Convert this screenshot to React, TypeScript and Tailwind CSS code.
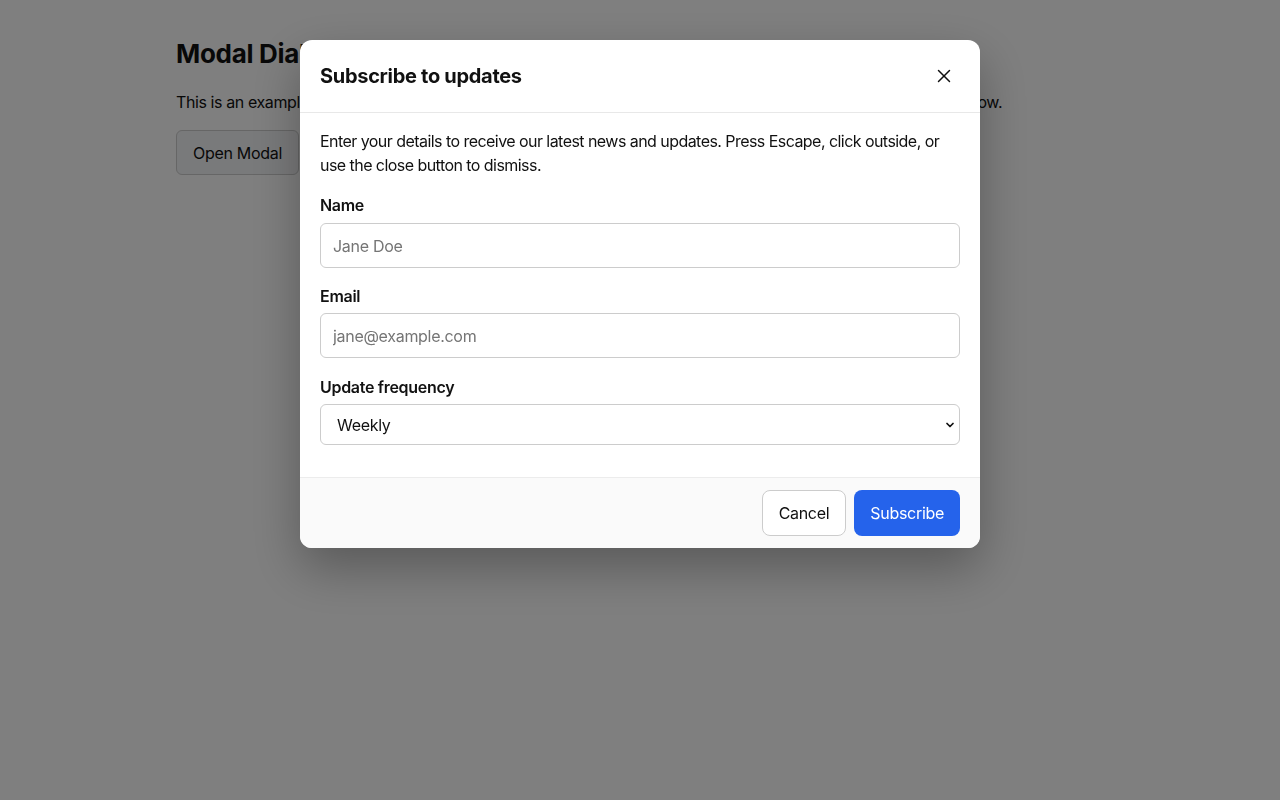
import { X, ChevronDown } from 'lucide-react'

const font = { fontFamily: 'Inter, "Noto Sans", sans-serif' }

export default function App() {
  return (
    <div className="relative min-h-[800px] bg-white tracking-[-0.3px] text-[#111]" style={font}>
      <div className="mx-auto max-w-[928px] pt-[36px]">
        <h1 className="text-[26px] font-bold leading-[36px]">Modal Dialog Example</h1>
        <p className="mt-[18px] text-base leading-6 tracking-[-0.4px]">
          This is an example of an accessible modal dialog. Click the button to open it and try its keyboard interactions below.
        </p>
        <button className="mt-4 h-[45px] rounded-md border border-[#ccc] bg-[#f3f4f6] px-4 text-base">
          Open Modal
        </button>
      </div>

      <div className="fixed inset-0 bg-black/50" />

      <div className="fixed inset-0 flex justify-center pt-10">
        <div className="h-fit w-[680px] overflow-hidden rounded-xl bg-white shadow-[0_20px_50px_rgba(0,0,0,0.3)]">
          <div className="flex h-[73px] items-center justify-between border-b border-[#e8e8e8] px-5">
            <h2 className="text-xl font-bold leading-7">Subscribe to updates</h2>
            <button className="flex h-8 w-8 items-center justify-center rounded" aria-label="Close">
              <X className="h-[22px] w-[22px]" strokeWidth={1.6} />
            </button>
          </div>

          <div className="px-5 pb-8 pt-4">
            <p className="text-base leading-6 tracking-[-0.55px]">
              Enter your details to receive our latest news and updates. Press Escape, click outside, or use the
              close button to dismiss.
            </p>

            <label className="mt-4 block text-base font-semibold leading-6">Name</label>
            <input
              className="mt-1.5 block h-[45px] w-full rounded-md border border-[#ccc] px-3 text-base placeholder:text-[#757575]"
              placeholder="Jane Doe"
            />

            <label className="mt-4 block text-base font-semibold leading-6">Email</label>
            <input
              className="mt-[5px] block h-[45px] w-full rounded-md border border-[#ccc] px-3 text-base placeholder:text-[#757575]"
              placeholder="jane@example.com"
            />

            <label className="mt-[17px] block text-base font-semibold leading-6">Update frequency</label>
            <div className="relative mt-[5px]">
              <select
                className="block h-[41px] w-full appearance-none rounded-md border border-[#ccc] bg-white pl-4 text-base"
                defaultValue="weekly"
              >
                <option value="daily">Daily</option>
                <option value="weekly">Weekly</option>
                <option value="monthly">Monthly</option>
              </select>
              <ChevronDown className="pointer-events-none absolute right-[4px] top-1/2 h-[12px] w-[12px] -translate-y-1/2" strokeWidth={3.5} />
            </div>
          </div>

          <div className="flex justify-end gap-2 border-t border-[#ececec] bg-[#fafafa] px-5 py-3">
            <button className="h-[46px] rounded-lg border border-[#ccc] bg-white px-4 text-base">Cancel</button>
            <button className="h-[46px] rounded-lg bg-[#2563eb] px-4 text-base text-white">Subscribe</button>
          </div>
        </div>
      </div>
    </div>
  )
}
